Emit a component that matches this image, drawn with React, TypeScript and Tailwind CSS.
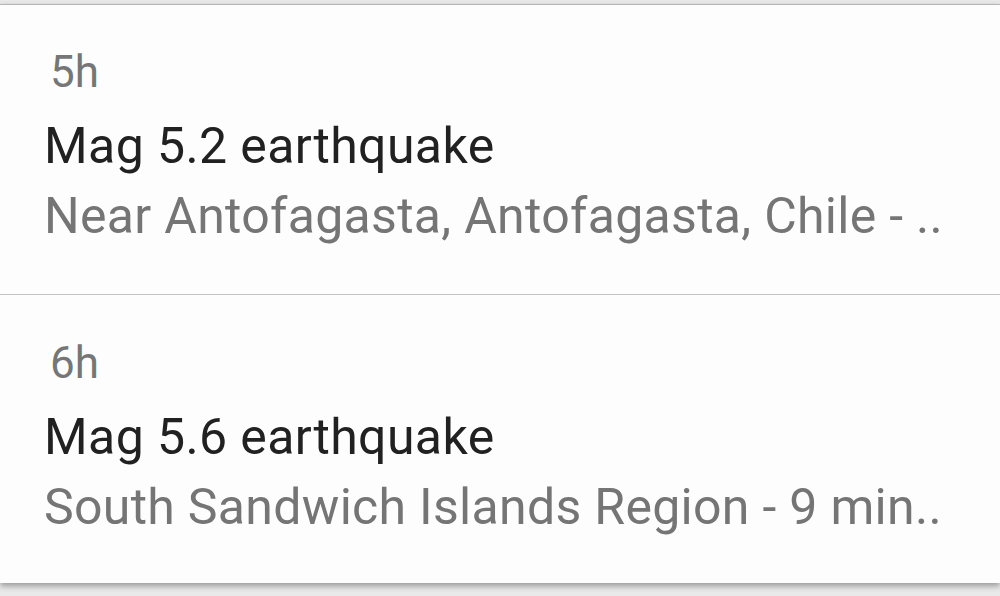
import React from "react";

const items = [
  { time: "5h", title: "Mag 5.2 earthquake", sub: "Near Antofagasta, Antofagasta, Chile - .." },
  { time: "6h", title: "Mag 5.6 earthquake", sub: "South Sandwich Islands Region - 9 min.." },
];

export default function App() {
  return (
    <div className="w-[1000px] h-[596px] bg-[#e9e9e9] overflow-hidden" style={{ fontFamily: "Roboto, 'Noto Sans', sans-serif" }}>
      <div className="h-[4px] bg-[#e9e9e9]" />
      <div className="bg-[#fdfdfd] border-t border-[#b5b5b5] shadow-[0_3px_6px_rgba(0,0,0,0.35)]">
        {items.map((it, i) => (
          <div key={i} className={i === 0 ? "h-[290px] pt-[45px] border-b border-[#c4c4c4]" : "h-[288px] pt-[46px]"}>
            <div className="pl-[50px] text-[44px] leading-none h-[44px] text-[#767676]">{it.time}</div>
            <div className="pl-[44px] mt-[27px] text-[50px] leading-none h-[50px] tracking-[0.4px] text-[#212121] whitespace-nowrap">{it.title}</div>
            <div className="pl-[44px] mt-[20px] text-[50px] leading-none h-[50px] tracking-[0.3px] text-[#757575] whitespace-nowrap">{it.sub}</div>
          </div>
        ))}
      </div>
    </div>
  );
}
